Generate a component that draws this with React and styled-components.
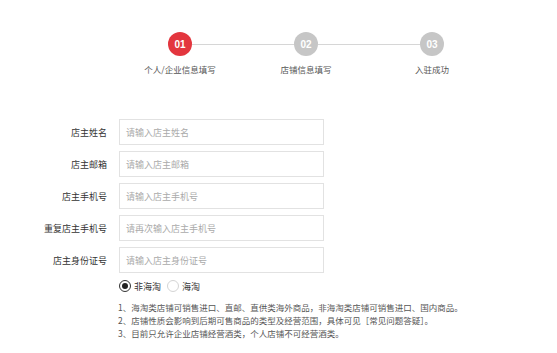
import styled, { createGlobalStyle } from 'styled-components';

const Global = createGlobalStyle`
body {
  margin: 0;
  background: #fff;
  font-family: 'Noto Sans CJK SC', 'Noto Sans', sans-serif;
}
`

const Page = styled.div`
width: 557px;
height: 353px;
overflow: hidden;
background: #fff;
`

const Steps = styled.div`
display: flex;
padding: 32px 0 0 117px;
`

const Step = styled.div`
width: 126px;
display: flex;
flex-direction: column;
align-items: center;
`

const CircleRow = styled.div`
width: 100%;
display: flex;
align-items: center;
`

const Line = styled.div`
flex: 1;
height: 1px;
background: ${p => (p.$hidden ? 'transparent' : '#d6d6d6')};
`

const Circle = styled.div`
width: 24px;
height: 24px;
border-radius: 50%;
background: ${p => (p.$active ? '#e3363e' : '#c6c6c6')};
color: #fff;
font-family: 'Liberation Sans', Arial, sans-serif;
font-weight: 700;
font-size: 10px;
display: flex;
align-items: center;
justify-content: center;
`

const StepLabel = styled.div`
margin-top: 7px;
font-size: 8.5px;
line-height: 12px;
color: #555;
white-space: nowrap;
`

const Form = styled.div`
margin-top: 44px;
display: flex;
flex-direction: column;
gap: 6px;
`

const Row = styled.div`
display: flex;
align-items: center;
`

const Label = styled.div`
width: 107px;
margin-right: 12px;
text-align: right;
font-size: 9px;
color: #333;
`

const Input = styled.div`
box-sizing: border-box;
width: 205px;
height: 26px;
border: 1px solid #e2e2e2;
padding-left: 6px;
display: flex;
align-items: center;
font-size: 9px;
color: #aaa;
`

const Radios = styled.div`
margin: 7px 0 0 119px;
display: flex;
align-items: center;
gap: 6px;
height: 12px;
`

const RadioItem = styled.div`
display: flex;
align-items: center;
gap: 3px;
font-size: 9px;
color: #333;
`

const RadioDot = styled.span`
box-sizing: border-box;
width: 12px;
height: 12px;
border-radius: 50%;
border: 1px solid ${p => (p.$on ? '#333' : '#d4d4d4')};
display: flex;
align-items: center;
justify-content: center;
&::after {
  content: '';
  width: 6px;
  height: 6px;
  border-radius: 50%;
  background: ${p => (p.$on ? '#222' : 'transparent')};
}
`

const Notes = styled.div`
margin: 9px 0 0 118px;
font-size: 8.5px;
line-height: 13px;
color: #555;
white-space: nowrap;
`

const steps = [
  { n: '01', label: '个人/企业信息填写', active: true },
  { n: '02', label: '店铺信息填写' },
  { n: '03', label: '入驻成功' },
]

const fields = [
  ['店主姓名', '请输入店主姓名'],
  ['店主邮箱', '请输入店主邮箱'],
  ['店主手机号', '请输入店主手机号'],
  ['重复店主手机号', '请再次输入店主手机号'],
  ['店主身份证号', '请输入店主身份证号'],
]

const notes = [
  '1、海淘类店铺可销售进口、直邮、直供类海外商品，非海淘类店铺可销售进口、国内商品。',
  '2、店铺性质会影响到后期可售商品的类型及经营范围，具体可见［常见问题答疑］。',
  '3、目前只允许企业店铺经营酒类，个人店铺不可经营酒类。',
]

export default function App() {
  return (
    <Page>
      <Global />
      <Steps>
        {steps.map((s, i) => (
          <Step key={s.n}>
            <CircleRow>
              <Line $hidden={i === 0} />
              <Circle $active={s.active}>{s.n}</Circle>
              <Line $hidden={i === steps.length - 1} />
            </CircleRow>
            <StepLabel>{s.label}</StepLabel>
          </Step>
        ))}
      </Steps>
      <Form>
        {fields.map(([label, ph]) => (
          <Row key={label}>
            <Label>{label}</Label>
            <Input>{ph}</Input>
          </Row>
        ))}
      </Form>
      <Radios>
        <RadioItem><RadioDot $on />非海淘</RadioItem>
        <RadioItem><RadioDot />海淘</RadioItem>
      </Radios>
      <Notes>
        {notes.map(n => <div key={n}>{n}</div>)}
      </Notes>
    </Page>
  )
}
